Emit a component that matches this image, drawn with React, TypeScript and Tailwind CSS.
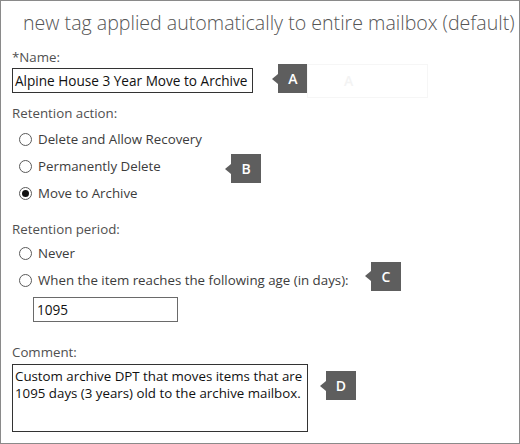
import React from 'react';

const Callout: React.FC<{ letter: string; className?: string }> = ({ letter, className = '' }) => (
  <div className={`flex items-center shrink-0 ${className}`}>
    <span className="w-0 h-0 border-y-[5px] border-y-transparent border-r-[6px] border-r-[#5e5e5e]"></span>
    <span className="w-[30px] h-[29px] bg-[#5e5e5e] text-white flex items-center justify-center text-[14px] font-semibold">
      {letter}
    </span>
  </div>
);

const Radio: React.FC<{ label: string; checked?: boolean }> = ({ label, checked }) => (
  <div className="flex items-center h-[27px] pl-[7px]">
    <span className="w-[13px] h-[13px] rounded-full border border-[#5a5a5a] flex items-center justify-center shrink-0">
      {checked && <span className="w-[7px] h-[7px] rounded-full bg-[#111]"></span>}
    </span>
    <span className="ml-[6px] text-[13.3px] text-[#3c3c3c] whitespace-nowrap">{label}</span>
  </div>
);

export default function App() {
  return (
    <div className="w-[520px] h-[444px] border border-[#8a8a8a] bg-white overflow-hidden font-['Open_Sans','Noto_Sans',sans-serif] pl-[11px]">
      {/* header */}
      <h1 className="mt-[7px] pl-[11px] h-[30px] leading-[30px] text-[19.6px] font-light text-[#555] whitespace-nowrap">
        new tag applied automatically to entire mailbox (default)
      </h1>

      {/* name */}
      <div className="mt-[11px] h-[16px] leading-[16px] text-[13.3px] text-[#505050]">*Name:</div>
      <div className="mt-[3px] flex items-center h-[25px]">
        <div className="w-[241px] h-[25px] border border-[#333] pl-[2px] leading-[23px] text-[13.6px] text-[#111] whitespace-nowrap overflow-hidden">
          Alpine House 3 Year Move to Archive
        </div>
        <Callout letter="A" className="ml-[19px] mb-[4px]" />
        <div className="-ml-[1px] w-[121px] h-[34px] border border-[#f6f6f6] flex items-center pl-[36px] text-[14px] font-semibold text-[#f3f3f3]">
          A
        </div>
      </div>

      {/* retention action */}
      <div className="mt-[12px] h-[16px] leading-[16px] text-[13.3px] text-[#505050]">Retention action:</div>
      <div className="mt-[5px]">
        <Radio label="Delete and Allow Recovery" />
        <div className="flex items-center h-[27px]">
          <div className="w-[213px]">
            <Radio label="Permanently Delete" />
          </div>
          <Callout letter="B" className="mt-[4px]" />
        </div>
        <Radio label="Move to Archive" checked />
      </div>

      {/* retention period */}
      <div className="mt-[14px] h-[16px] leading-[16px] text-[13.3px] text-[#505050]">Retention period:</div>
      <div className="mt-[3px]">
        <Radio label="Never" />
        <div className="flex items-center h-[27px]">
          <div className="w-[353px]">
            <Radio label="When the item reaches the following age (in days):" />
          </div>
          <Callout letter="C" className="mb-[9px]" />
        </div>
      </div>
      <div className="mt-[3px] ml-[21px] w-[145px] h-[25px] border border-[#6a6a6a] pl-[3px] leading-[23px] text-[13.6px] text-[#111]">
        1095
      </div>

      {/* comment */}
      <div className="mt-[22px] h-[16px] leading-[16px] text-[13.3px] text-[#505050]">Comment:</div>
      <div className="mt-[4px] flex items-start">
        <div className="w-[296px] h-[68px] border border-[#333] pl-[2px] pt-[3px] text-[13.3px] leading-[17px] text-[#111]">
          <div className="whitespace-nowrap">Custom archive DPT that moves items that are</div>
          <div className="whitespace-nowrap">1095 days (3 years) old to the archive mailbox.</div>
        </div>
        <Callout letter="D" className="ml-[12px] mt-[7px]" />
      </div>
    </div>
  );
}
